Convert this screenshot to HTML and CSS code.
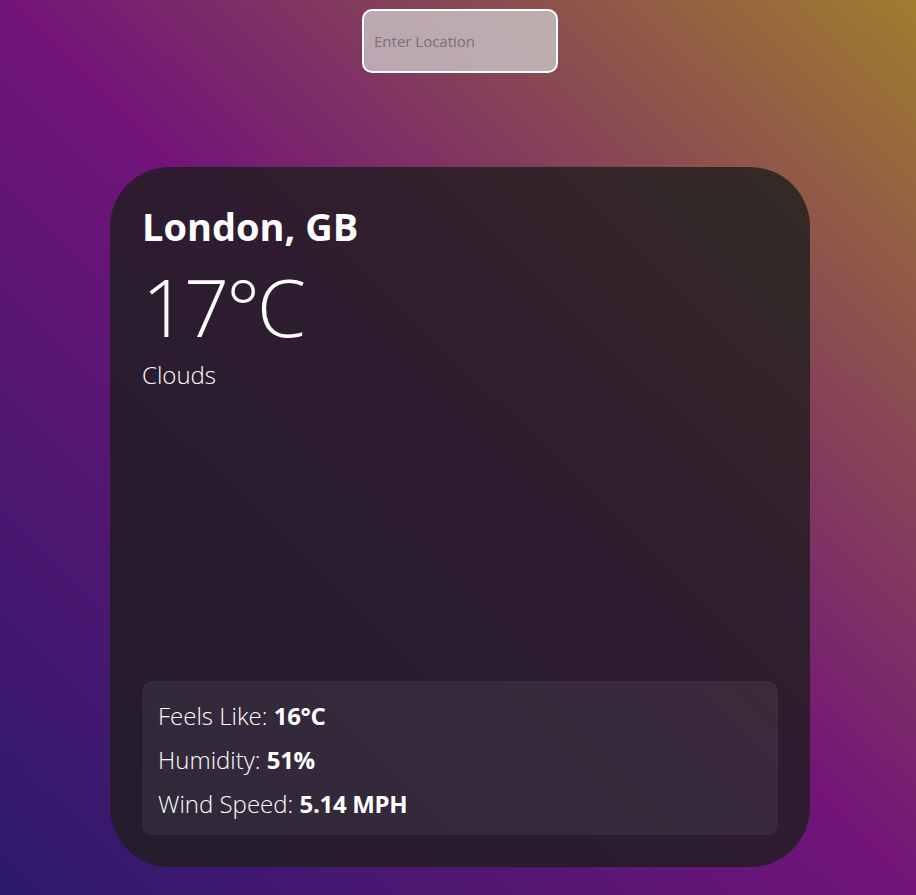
FILE: index.html
```html
<!DOCTYPE html>
<html lang="en">
<head>
<meta charset="utf-8">
<title>Weather</title>
<link rel="stylesheet" href="styles.css">
</head>
<body>
<div class="app">
  <div class="search">
    <input class="search-input" type="text" placeholder="Enter Location" autofocus>
  </div>
  <div class="card">
    <div class="top">
      <h1 class="location">London, GB</h1>
      <div class="temp">17°C</div>
      <p class="desc">Clouds</p>
    </div>
    <div class="details">
      <p class="row">Feels Like: <b>16°C</b></p>
      <p class="row">Humidity: <b>51%</b></p>
      <p class="row">Wind Speed: <b>5.14 MPH</b></p>
    </div>
  </div>
</div>
</body>
</html>
```
FILE: styles.css
```css
html, body {
  margin: 0;
  padding: 0;
}
body {
  min-height: 100vh;
  background: linear-gradient(to top right, #2b1a6b 0%, #721479 50%, #a07c2e 100%);
  font-family: "Open Sans", "Noto Sans", sans-serif;
  color: #fff;
}
.app {
  display: flex;
  flex-direction: column;
  align-items: center;
  padding: 9px 0 28px 4px;
}
.search-input {
  box-sizing: border-box;
  width: 196px;
  height: 64px;
  border: 2px solid #fff;
  border-radius: 10px;
  background: rgba(205, 205, 205, 0.75);
  padding: 0 10px;
  font-family: "Open Sans", sans-serif;
  font-size: 15px;
  color: #333;
  outline: none;
  caret-color: #fff;
}
.search-input::placeholder {
  color: #7a7076;
}
.card {
  box-sizing: border-box;
  width: 700px;
  height: 700px;
  margin-top: 94px;
  padding: 33px 32px 32px;
  border-radius: 60px;
  background: rgba(30, 30, 30, 0.8);
  display: flex;
  flex-direction: column;
  justify-content: space-between;
}
.location {
  margin: 0;
  font-size: 38px;
  line-height: 52px;
  font-weight: 700;
}
.temp {
  margin-top: 11px;
  font-size: 79px;
  line-height: 88px;
  font-weight: 300;
  letter-spacing: -3px;
}
.desc {
  margin: 8px 0 0;
  font-size: 24px;
  line-height: 32px;
  font-weight: 300;
}
.details {
  padding: 13px 16px 9px;
  border-radius: 10px;
  background: rgba(255, 255, 255, 0.06);
}
.row {
  margin: 0;
  font-size: 24px;
  line-height: 44px;
  font-weight: 300;
}
.row b {
  font-weight: 700;
  letter-spacing: -0.3px;
}
```
